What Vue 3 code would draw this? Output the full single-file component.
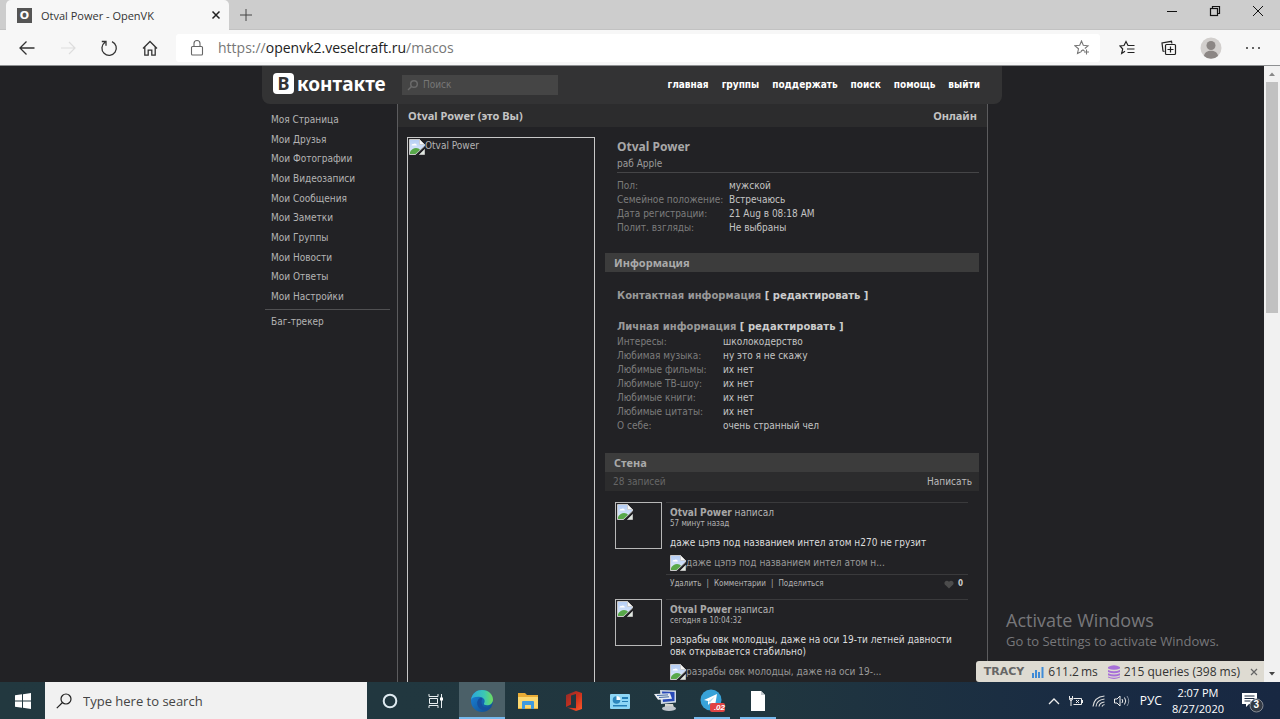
<script setup>
import { ref } from 'vue'

const query = ref('')
const taskQuery = ref('')

const topLinks = ['главная', 'группы', 'поддержать', 'поиск', 'помощь', 'выйти']
const sideLinks = [
  'Моя Страница', 'Мои Друзья', 'Мои Фотографии', 'Мои Видеозаписи', 'Мои Сообщения',
  'Мои Заметки', 'Мои Группы', 'Мои Новости', 'Мои Ответы', 'Мои Настройки'
]
const basics = [
  ['Пол:', 'мужской'],
  ['Семейное положение:', 'Встречаюсь'],
  ['Дата регистрации:', '21 Aug в 08:18 AM'],
  ['Полит. взгляды:', 'Не выбраны']
]
const personal = [
  ['Интересы:', 'школокодерство'],
  ['Любимая музыка:', 'ну это я не скажу'],
  ['Любимые фильмы:', 'их нет'],
  ['Любимые ТВ-шоу:', 'их нет'],
  ['Любимые книги:', 'их нет'],
  ['Любимые цитаты:', 'их нет'],
  ['О себе:', 'очень странный чел']
]
const posts = [
  {
    time: '57 минут назад',
    text: 'даже цэпэ под названием интел атом н270 не грузит',
    alt: 'даже цэпэ под названием интел атом н...',
    likes: 0
  },
  {
    time: 'сегодня в 10:04:32',
    text: 'разрабы овк молодцы, даже на оси 19-ти летней давности овк открывается стабильно)',
    alt: 'разрабы овк молодцы, даже на оси 19-...'
  }
]
</script>

<template>
  <div class="desktop">
    <svg class="defs" aria-hidden="true">
      <defs>
        <linearGradient id="sky" x1="0" y1="0" x2="0" y2="1">
          <stop offset="0" stop-color="#b4cdf5" /><stop offset="1" stop-color="#e4eefc" />
        </linearGradient>
        <symbol id="broken" viewBox="0 0 16 16">
          <path d="M.5.500h10l5 5V7L6.500 15.500h-6z" fill="url(#sky)" stroke="#c9c9c9" />
          <path d="M2.500 6.500a1.600 1.600 0 0 1 2-1.400 2 2 0 0 1 3.400 1.400z" fill="#fff" />
          <path d="M1 15v-2c2-3.500 5.500-5 8.500-3.500l1.500 1.300L6.500 15z" fill="#58a84a" />
          <path d="M10.500.5v5h5z" fill="#f8f8f8" stroke="#c9c9c9" stroke-width=".8" />
          <path d="M10.500 15.500L15.500 10.500v5z" fill="#dfe8df" stroke="#c9c9c9" stroke-width=".8" />
        </symbol>
        <linearGradient id="edgeTop" x1="0" y1="0" x2="1" y2="0">
          <stop offset="0" stop-color="#2aa6dd" /><stop offset=".6" stop-color="#3cc7b4" /><stop offset="1" stop-color="#6fdc5c" />
        </linearGradient>
        <linearGradient id="edgeLow" x1="0" y1="0" x2="1" y2="1">
          <stop offset="0" stop-color="#1a86dd" /><stop offset="1" stop-color="#114a8b" />
        </linearGradient>
        <linearGradient id="office" x1="0" y1="0" x2="1" y2="1">
          <stop offset="0" stop-color="#8c2b2b" /><stop offset=".5" stop-color="#c9301c" /><stop offset="1" stop-color="#ff5a2a" />
        </linearGradient>
      </defs>
    </svg>

    <header class="tabstrip">
      <div class="tab">
        <span class="favicon">O</span>
        <span class="tab-title">Otval Power - OpenVK</span>
        <button class="tab-close" aria-label="Close tab">
          <svg width="10" height="10" viewBox="0 0 10 10"><path d="M1.500 1.500l7 7m0-7l-7 7" stroke="#222" stroke-width="1.500" /></svg>
        </button>
      </div>
      <button class="newtab" aria-label="New tab">
        <svg width="14" height="14" viewBox="0 0 14 14"><path d="M7 1v12M1 7h12" stroke="#444" /></svg>
      </button>
      <div class="wincontrols">
        <button aria-label="Minimize"><svg width="12" height="12" viewBox="0 0 12 12"><path d="M1 6.500h10" stroke="#111" /></svg></button>
        <button aria-label="Restore"><svg width="12" height="12" viewBox="0 0 12 12" fill="none" stroke="#111" stroke-width="1.200"><rect x="1.500" y="3.500" width="7" height="7" /><path d="M3.500 3.500v-2h7v7h-2" /></svg></button>
        <button aria-label="Close"><svg width="12" height="12" viewBox="0 0 12 12"><path d="M1 1l10 10M11 1L1 11" stroke="#111" /></svg></button>
      </div>
    </header>

    <div class="toolbar">
      <div class="navbtns">
        <button aria-label="Back"><svg width="18" height="18" viewBox="0 0 18 18" fill="none" stroke="#333" stroke-width="1.300"><path d="M16.500 9H2M8.500 2.500L2 9l6.500 6.500" /></svg></button>
        <button aria-label="Forward"><svg width="18" height="18" viewBox="0 0 18 18" fill="none" stroke="#ddd" stroke-width="1.200"><path d="M2 9h14M10 3l6 6-6 6" /></svg></button>
        <button aria-label="Refresh"><svg width="18" height="18" viewBox="0 0 18 18" fill="none" stroke="#333" stroke-width="1.300"><path d="M5 3.300A7.200 7.200 0 1 0 12 2.600M1.800 2.500H6v4.200" /></svg></button>
        <button aria-label="Home"><svg width="18" height="18" viewBox="0 0 18 18" fill="none" stroke="#333" stroke-width="1.300"><path d="M2 9.500l7-7 7 7M3.800 8v8.200h3.400v-5h3.600v5h3.400V8" /></svg></button>
      </div>
      <div class="address">
        <svg width="14" height="18" viewBox="0 0 14 18" fill="none" stroke="#666" stroke-width="1.100"><rect x="1.500" y="7.500" width="11" height="8.500" rx="1" /><path d="M4 7.500V4.500a3 3 0 0 1 6 0v3" /></svg>
        <div class="url" role="textbox" aria-label="Address" contenteditable="true" spellcheck="false">https://<b>openvk2.veselcraft.ru</b>/macos</div>
        <button class="fav" aria-label="Add to favorites"><svg width="16" height="16" viewBox="0 0 16 16" fill="none" stroke="#777" stroke-width="1.100"><path d="M8 11.300L3.500 13.500l1-4.700L1 5.800l4.700-.6L7.500 1l1.800 4.200 4.700.6-3.200 2.700M7 11l2-1 1.500 1M12.500 9.500v5M10 12h5" /></svg></button>
      </div>
      <div class="tools">
        <button aria-label="Favorites"><svg width="16" height="16" viewBox="0 0 16 16" fill="none" stroke="#222" stroke-width="1.200"><path d="M6 11.300L2.700 13.500l1-4.500L1 6l4-.5L7 1.500l2 4h6.500M8 9h7.500M8.500 12.500h7" /></svg></button>
        <button aria-label="Collections"><svg width="16" height="16" viewBox="0 0 16 16" fill="none" stroke="#222" stroke-width="1.200"><path d="M3.500 11.500L2 11 1 3l9.500-1.700.4 2.200" /><rect x="4.500" y="4.500" width="10" height="10" rx="1" /><path d="M9.500 6.500v6M6.500 9.500h6" /></svg></button>
        <button aria-label="Profile"><svg width="22" height="22" viewBox="0 0 22 22"><circle cx="11" cy="11" r="10.500" fill="#d2cfcd" /><circle cx="11" cy="8.500" r="4.500" fill="#8b8684" /><path d="M4 19c.5-7 13.500-7 14 0a10 10 0 0 1-14 0z" fill="#8b8684" /></svg></button>
        <button aria-label="Menu"><svg width="16" height="4" viewBox="0 0 16 4" fill="#333"><circle cx="2" cy="2" r="1" /><circle cx="8" cy="2" r="1" /><circle cx="14" cy="2" r="1" /></svg></button>
      </div>
    </div>

    <div class="viewport">
      <div class="page">
        <div class="site">
          <div class="site-head">
            <a class="logo" href="#">
              <span class="logo-mark">В</span><span>контакте</span>
            </a>
            <label class="site-search">
              <svg width="12" height="12" viewBox="0 0 12 12" fill="none" stroke="#6a6a6a" stroke-width="1.500"><circle cx="7" cy="5" r="3.300" /><path d="M4.500 7.500L1 11" /></svg>
              <input v-model="query" type="text" placeholder="Поиск" aria-label="Поиск" />
            </label>
            <nav class="topnav"><a v-for="l in topLinks" :key="l" href="#">{{ l }}</a></nav>
          </div>

          <div class="columns">
            <nav class="side">
              <div class="side-links"><a v-for="l in sideLinks" :key="l" href="#">{{ l }}</a></div>
              <a class="bug" href="#">Баг-трекер</a>
            </nav>

            <main class="main">
              <div class="titlebar"><span>Otval Power (это Вы)</span><span>Онлайн</span></div>
              <div class="profile">
                <div class="photo"><svg width="16" height="16"><use href="#broken" /></svg><span>Otval Power</span></div>
                <div class="info">
                  <div class="padded">
                    <h1>Otval Power</h1>
                    <p class="status">раб Apple</p>
                    <table class="facts basics">
                      <tbody><tr v-for="r in basics" :key="r[0]"><th scope="row">{{ r[0] }}</th><td>{{ r[1] }}</td></tr></tbody>
                    </table>
                  </div>
                  <h2 class="bar">Информация</h2>
                  <div class="padded">
                    <h3 class="contact">Контактная информация <a href="#">[ редактировать ]</a></h3>
                    <h3>Личная информация <a href="#">[ редактировать ]</a></h3>
                    <table class="facts personal">
                      <tbody><tr v-for="r in personal" :key="r[0]"><th scope="row">{{ r[0] }}</th><td>{{ r[1] }}</td></tr></tbody>
                    </table>
                  </div>
                  <h2 class="bar">Стена</h2>
                  <div class="subbar"><span>28 записей</span><a href="#">Написать</a></div>
                  <div class="posts">
                    <article v-for="p in posts" :key="p.time" class="post">
                      <div class="avatar"><svg width="16" height="16"><use href="#broken" /></svg></div>
                      <div class="body">
                        <div class="author"><b>Otval Power</b> написал</div>
                        <div class="time">{{ p.time }}</div>
                        <p>{{ p.text }}</p>
                        <div class="attach"><svg width="16" height="16"><use href="#broken" /></svg><span>{{ p.alt }}</span></div>
                        <div v-if="p.likes !== undefined" class="actions">
                          <a href="#">Удалить</a><i>|</i><a href="#">Комментарии</a><i>|</i><a href="#">Поделиться</a>
                          <button class="like" aria-label="Нравится"><svg width="10" height="9" viewBox="0 0 10 9"><path d="M5 8.500L.8 4.500C-.8 1.500 3-.8 5 1.800 7-.8 10.800 1.500 9.200 4.500z" fill="#4c4c4c" /></svg>{{ p.likes }}</button>
                        </div>
                      </div>
                    </article>
                  </div>
                </div>
              </div>
            </main>
          </div>
        </div>
        <div class="watermark"><div>Activate Windows</div><p>Go to Settings to activate Windows.</p></div>
        <div class="tracy">
          <strong>TRACY</strong>
          <svg width="12" height="12" viewBox="0 0 12 12" fill="#3f8bd6"><path d="M0 7h2v5H0zM3 4h2v8H3zM6 6h2v6H6zM9.500 1h2v11h-2z" /></svg>
          <span class="ms">611.2&#8201;ms</span>
          <svg width="12" height="14" viewBox="0 0 12 14" fill="#a76fd8"><path d="M0 2q6-3.500 12 0v1.500q-6 2.500-12 0zM0 5q6 2.500 12 0v2q-6 2.500-12 0zM0 8.300q6 2.500 12 0v2q-6 2.500-12 0zM0 11.500q6 2.500 12 0v1q-6 2.800-12 0z" /></svg>
          <span>215 queries (398 ms)</span>
          <button aria-label="Close panel"><svg width="8" height="8" viewBox="0 0 8 8"><path d="M1 1l6 6m0-6L1 7" stroke="#666" stroke-width="1.200" /></svg></button>
        </div>
      </div>
      <div class="scrollbar">
        <svg width="16" height="16" viewBox="0 0 16 16"><path d="M5 10l3-3.500L11 10z" fill="#888" /></svg>
        <div class="thumb"></div>
        <svg class="down" width="16" height="16" viewBox="0 0 16 16"><path d="M5 6l3 3.500L11 6z" fill="#444" /></svg>
      </div>
    </div>

    <footer class="taskbar">
      <button class="start" aria-label="Start"><svg width="16" height="16" viewBox="0 0 16 16" fill="#fff"><path d="M0 2.300l7-1v6.200H0zM8 1.200L16 0v7.500H8zM0 8.500h7v6.200l-7-1zM8 8.500h8V16l-8-1.200z" /></svg></button>
      <label class="task-search">
        <svg width="16" height="16" viewBox="0 0 16 16" fill="none" stroke="#222" stroke-width="1.200"><circle cx="10" cy="6" r="5" /><path d="M6.500 9.500L.800 15.200" /></svg>
        <input v-model="taskQuery" type="text" placeholder="Type here to search" aria-label="Type here to search" />
      </label>
      <div class="apps">
        <button aria-label="Cortana"><svg width="16" height="16" viewBox="0 0 16 16"><circle cx="8" cy="8" r="6.300" fill="none" stroke="#dfeaf0" stroke-width="2" /></svg></button>
        <button aria-label="Task view"><svg width="16" height="16" viewBox="0 0 16 16" fill="none" stroke="#e8eef0"><path d="M1 1v2.500h9V1M1 15v-2.500h9V15M1.500 5.500h8v5h-8zM13.500 1v14" /><path d="M12 4.500h3v3h-3z" fill="#fff" stroke="none" /></svg></button>
        <button class="active" aria-label="Edge"><svg width="24" height="24" viewBox="0 0 24 24"><circle cx="12" cy="12" r="11" fill="url(#edgeLow)" /><path d="M1 11C2 4 7 1 12 1c7 0 11 5 11 9.500 0 4-3 5.800-6 5.800-2.500 0-3.500-1-3-2 1.500-2 .5-5.800-3.500-6.300C6 7.300 2 8.500 1 11z" fill="url(#edgeTop)" /><path d="M10 9c-5 3-3 11 3 12 4 .8 7-1 9-3.500-4 2-8 1.500-9.500-1C11 14 11.500 11 12.500 10 12 9 11 8.500 10 9z" fill="#164f9e" /></svg></button>
        <button aria-label="Explorer"><svg width="22" height="20" viewBox="0 0 22 20"><path d="M1 2h7l2 2h11v14H1z" fill="#e8ac36" /><path d="M1 6h20v11H1z" fill="#fbd870" /><path d="M5 11q0-1 1-1h10q1 0 1 1v7h-3v-4H8v4H5z" fill="#3f9ade" /></svg></button>
        <button aria-label="Office"><svg width="18" height="22" viewBox="0 0 18 22"><path d="M11 1l6 2v16l-6 2-9-3.500 9 .8V4L6 5.500v9L1 17V5z" fill="url(#office)" /></svg></button>
        <button aria-label="Control panel"><svg width="20" height="16" viewBox="0 0 20 16"><rect width="20" height="15" y="1" rx="1" fill="#8ed6f5" /><circle cx="6.500" cy="7" r="3.800" fill="#2d87bd" /><path d="M6.500 7V3A4 4 0 0 1 10.500 7z" fill="#fff" /><path d="M12 4h6v2h-6zM12 8h6v1h-6zM3 12h14v1.500H3z" fill="#247eb6" /></svg></button>
        <button aria-label="Remote desktop"><svg width="24" height="24" viewBox="0 0 24 24"><path d="M6 1l16 .5v12L7 15z" fill="#cfd8e4" /><path d="M8 2.500l12.500.5v9L9 13z" fill="#2849b7" /><path d="M0 5l16-.8 2 5.500-14 1z" fill="#e8edf3" /><path d="M3 6.500l11-.6M5 8.500l10-.7" stroke="#4169a1" /><path d="M11 15h8l1 4q-5 3-9 0z" fill="#d6d5cf" /><ellipse cx="15" cy="19.500" rx="7" ry="2.500" fill="#c0c5cc" /></svg></button>
        <button class="open" aria-label="Telegram"><svg width="28" height="26" viewBox="0 0 28 26"><circle cx="13" cy="12" r="10.500" fill="#38a2d8" /><path d="M6 12l13-6-2 12-5-3-2 2v-4z" fill="#fff" /><path d="M10 13.500l7-5-5 6z" fill="#b7dceb" /><rect x="12" y="15" width="15" height="9" rx="2" fill="#e04444" /></svg><span class="count">.02</span></button>
        <button class="open" aria-label="Document"><svg width="16" height="20" viewBox="0 0 16 20"><path d="M1 0h10l4 4v16H1z" fill="#fff" /><path d="M11 0v4h4z" fill="#c4cacf" /></svg></button>
      </div>
      <div class="tray">
        <svg width="12" height="8" viewBox="0 0 12 8" fill="none" stroke="#eee" stroke-width="1.300"><path d="M1 7l5-5 5 5" /></svg>
        <svg width="16" height="12" viewBox="0 0 16 12" fill="none" stroke="#eee"><path d="M5.500 3.500h8v6h-8M14.500 5v3M1.500 1v2.500h3V1M3 3.500V11M8 5l3 3m0-3L8 8M1.500 3.500q0 2 1.500 2t1.500-2" /></svg>
        <svg width="14" height="12" viewBox="0 0 14 12" fill="none" stroke="#ddd" stroke-width="1.100"><path d="M1 11.500Q2 2 12.500 1M4 11.500q.5-6.500 8.500-7.500M7 11.500q.5-4 5.500-4.500M10 11.500q.5-1.500 2.500-2" /></svg>
        <svg width="16" height="12" viewBox="0 0 16 12" fill="none" stroke="#eee"><path d="M.500 4h2.500l3-3v10L3 8H.5zM8 4q1.500 2 0 4M10.500 2.500q2.500 3.500 0 7" /><path d="M13 1q3.500 5 0 10" stroke="#8590a0" /></svg>
        <span class="lang">РУС</span>
        <div class="clock"><div>2:07 PM</div><div>8/27/2020</div></div>
        <button class="notice" aria-label="Notifications"><svg width="24" height="24" viewBox="0 0 24 24"><path d="M2 4h15v11H9l-3 3v-3H2z" fill="#fff" /><path d="M4.500 7h10M4.500 9.500h10M4.500 12h6" stroke="#1d2c43" /><circle cx="16.500" cy="16.500" r="6.500" fill="#333a44" stroke="#858b94" /></svg><span class="num">3</span></button>
      </div>
    </footer>
  </div>
</template>

<style>
html, body { margin: 0; background: #222225; }
</style>

<style scoped>
.desktop { height: 100vh; display: flex; flex-direction: column; overflow: hidden; font-family: "Open Sans", "Noto Sans", sans-serif; }
.defs { position: absolute; width: 0; height: 0; }
button { border: 0; padding: 0; margin: 0; background: none; font: inherit; color: inherit; display: flex; align-items: center; justify-content: center; flex: none; }
input { border: 0; padding: 0; margin: 0; background: none; outline: 0; min-width: 0; flex: 1; font: inherit; color: inherit; }
a { color: inherit; text-decoration: none; }
svg { display: block; flex: none; }

.tabstrip { flex: none; height: 30px; background: #cdcdcd; display: flex; padding-left: 6px; box-shadow: inset 0 -1px #c2c2c2; }
.tab { width: 223px; box-sizing: border-box; display: flex; align-items: center; padding: 0 8px 0 11px; background: #f7f7f7; border-radius: 5px 5px 0 0; font-size: 11px; color: #333; }
.favicon { width: 15px; height: 15px; background: #555; color: #fff; font: bold 11px/15px "DejaVu Sans", sans-serif; text-align: center; margin-right: 9px; }
.tab-title { flex: 1; white-space: nowrap; }
.newtab { width: 34px; }
.wincontrols { margin-left: auto; display: flex; height: 22px; padding-right: 1px; }
.wincontrols button { width: 43px; }

.toolbar { flex: none; height: 36px; display: flex; align-items: center; background: #f7f7f7; border-bottom: 1px solid #8e9092; box-sizing: border-box; }
.navbtns { display: flex; width: 176px; padding-left: 6px; box-sizing: border-box; }
.navbtns button { width: 41px; height: 30px; }
.address { flex: 1; height: 28px; background: #fff; border-radius: 3px; display: flex; align-items: center; padding: 0 10px 0 14px; font-size: 14px; }
.url { flex: 1; margin-left: 14px; color: #777; outline: 0; }
.url b { font-weight: normal; color: #222; }
.tools { display: flex; padding-left: 6px; padding-right: 6px; }
.tools button { width: 42px; height: 30px; }

.viewport { flex: 1; min-height: 0; display: flex; }
.page { flex: 1; position: relative; overflow: hidden; background: #222225; color: #b4b4b4; font: 10px/14px "DejaVu Sans Condensed", "DejaVu Sans", sans-serif; }
.site { width: 740px; margin: 0 auto; }
.site-head { height: 38px; background: #333334; border-radius: 0 0 8px 8px; display: flex; align-items: center; padding: 0 22px 0 11px; }
.logo { width: 129px; display: flex; align-items: center; gap: 3px; padding-bottom: 3px; box-sizing: border-box; color: #fff; font: bold 19px/20px "Noto Sans", sans-serif; }
.logo-mark { width: 21px; height: 21px; border-radius: 4px; background: #fff; color: #333334; text-align: center; font: bold 18px/21px "Noto Sans", sans-serif; }
.site-search { width: 156px; height: 20px; box-sizing: border-box; display: flex; align-items: center; gap: 4px; padding: 0 5px; background: #454545; color: #8a8a8a; }
.site-search input::placeholder { color: #777; opacity: 1; }
.topnav { margin-left: auto; display: flex; gap: 13px; color: #fff; font-weight: bold; }

.columns { display: flex; }
.side { width: 135px; padding-top: 6px; box-sizing: border-box; }
.side-links { height: 197px; display: grid; grid-auto-rows: 1fr; align-items: center; padding-left: 9px; }
.bug { display: block; margin: 2px 7px 0 3px; padding: 5px 0 0 6px; border-top: 1px solid #505052; }
.main { flex: 1; border: solid #5c5c5e; border-width: 0 1px; margin-right: 14px; }
.titlebar { height: 23px; display: flex; justify-content: space-between; align-items: center; padding: 0 10px; background: #2c2c2d; font: bold 11px/16px "Noto Sans", sans-serif; color: #c4c4c4; }
.profile { display: flex; gap: 10px; padding: 10px 8px 0 9px; }
.photo { width: 188px; height: 600px; box-sizing: border-box; border: 1px solid #c8c8c8; display: flex; padding: 1px; }
.info { flex: 1; min-width: 0; }
.padded { padding-left: 12px; }
h1, h2, h3, p { margin: 0; }
h1 { font: bold 12px/20px "Noto Sans", sans-serif; color: #a8a8a8; }
.status { height: 15px; border-bottom: 1px solid #454547; color: #9a9a9a; }
.facts { border-collapse: collapse; }
.facts th { font-weight: normal; text-align: left; color: #7c7c7c; padding: 0; }
.facts td { padding: 0; color: #c4c4c4; white-space: nowrap; }
.basics { margin: 6px 0 18px; }
.basics th { width: 112px; }
.personal { margin-bottom: 20px; }
.personal th { width: 106px; }
.bar { height: 19px; padding-left: 9px; background: #3c3c3c; font: bold 11px/19px "Noto Sans", sans-serif; color: #aaa; }
h3 { font: bold 10px/16px "DejaVu Sans", sans-serif; color: #999; white-space: nowrap; }
h3 a { color: #ccc; }
.contact { margin: 16px 0 15px; }
.subbar { height: 19px; display: flex; align-items: center; justify-content: space-between; padding: 0 7px 0 8px; background: #2c2c2d; color: #666; line-height: 16px; }
.subbar a { color: #bbb; }
.posts { padding: 11px 11px 0 10px; }
.post { display: flex; gap: 4px; margin-bottom: 8px; }
.avatar { width: 47px; height: 47px; box-sizing: border-box; border: 1px solid #b8b8b8; padding: 1px; }
.body { flex: 1; border-top: 1px solid #3a3a3c; padding: 3px 0 0; }
.body > * { padding-left: 4px; }
.author b { color: #a8a8a8; }
.time { font-size: 8px; line-height: 8px; }
.post p { margin-top: 9px; line-height: 12px; color: #ddd; }
.attach { display: flex; align-items: center; height: 16px; margin: 6px 0 3px; color: #999; white-space: nowrap; }
.actions { display: flex; align-items: center; gap: 5px; height: 14px; padding-top: 2px; border-top: 1px solid #3a3a3c; font-size: 8px; }
.actions i { font-style: normal; }
.like { margin-left: auto; margin-right: 5px; gap: 4px; font-weight: bold; color: #ccc; }

.watermark { position: absolute; right: 38px; bottom: 31px; width: 220px; color: #77777a; font-family: "Open Sans", "Noto Sans", sans-serif; font-size: 13px; line-height: 20px; white-space: nowrap; }
.watermark div { font-size: 18px; line-height: 22px; }
.tracy { position: absolute; right: 0; bottom: 0; height: 21px; box-sizing: border-box; display: flex; align-items: center; padding: 0 6px 0 8px; gap: 4px; background: #dedbd2; border-radius: 3px 0 0 3px; color: #333; font: 12px/20px "Open Sans", "Noto Sans", sans-serif; white-space: nowrap; }
.tracy strong { font: bold 11px/20px "DejaVu Sans", sans-serif; color: #666; margin-right: 4px; }
.ms { margin-right: 6px; }
.tracy button { margin-left: 6px; }
.scrollbar { flex: none; width: 16px; background: #f1f1f1; display: flex; flex-direction: column; }
.thumb { height: 231px; margin: 0 2px; background: #c1c1c1; }
.down { margin-top: auto; }

.taskbar { flex: none; height: 37px; display: flex; color: #fff; background: linear-gradient(90deg, #22383f, #20363f 60%, #192b43 85%, #182842); }
.start { width: 45px; }
.task-search { width: 322px; box-sizing: border-box; display: flex; align-items: center; gap: 11px; padding: 0 11px; background: #f1f1f1; color: #444; font-size: 13px; }
.task-search input::placeholder { color: #444; opacity: 1; }
.apps { display: flex; }
.apps button { position: relative; width: 46px; box-sizing: border-box; }
.apps .active { background: #4b6068; box-shadow: inset 0 -2px #76b9ed; }
.apps .open::after { content: ""; position: absolute; left: 5px; right: 5px; bottom: 0; height: 2px; background: #76b9ed; }
.count { position: absolute; right: 10px; bottom: 7px; font: italic bold 8px/8px "Liberation Sans", sans-serif; }
.tray { margin-left: auto; display: flex; align-items: center; gap: 8px; padding-right: 16px; font-size: 12px; }
.lang { margin-left: 2px; }
.clock { font-size: 11px; line-height: 16px; text-align: center; margin: 0 8px 0 2px; }
.notice { position: relative; }
.num { position: absolute; right: 5px; bottom: 2px; font: bold 10px/12px "Liberation Sans", sans-serif; }
</style>
